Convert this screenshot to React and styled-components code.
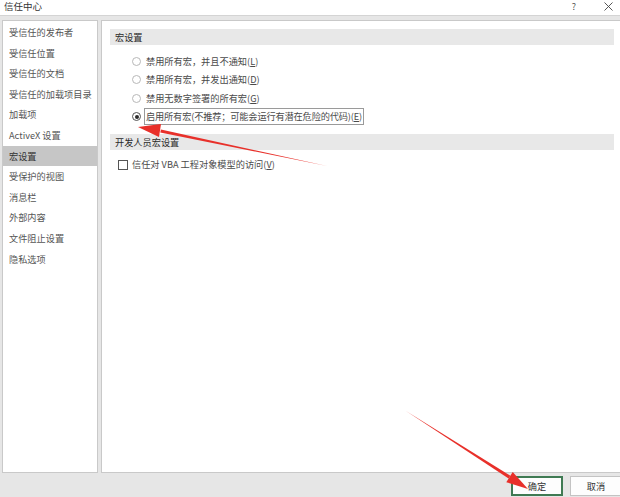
import styled, { createGlobalStyle } from "styled-components";

const Global = createGlobalStyle`
    html, body { margin: 0; padding: 0; }
    body {
        font-family: "Noto Sans CJK SC", "Liberation Sans", sans-serif;
        font-size: 9.2px;
        color: #444;
        background: #e6e6e6;
    }
`

const Window = styled.div`
    width: 620px;
    height: 497px;
    display: flex;
    flex-direction: column;
    overflow: hidden;
    position: relative;
    background: #e6e6e6;
`

const TitleBar = styled.div`
    height: 16px;
    background: #fff;
    border-bottom: 1px solid #d4d4d4;
    display: flex;
    align-items: flex-start;
    padding: 1px 0 0 4px;
    box-sizing: border-box;
    font-size: 9.5px;
    color: #333;
`
const Title = styled.span`
    flex: 1;
    line-height: 11px;
`
const TitleBtn = styled.span`
    width: ${p => p.$w}px;
    height: 11px;
    display: flex;
    justify-content: center;
    align-items: center;
    color: #555;
    font-size: 9px;
    line-height: 11px;
`

const Body = styled.div`
    flex: 1;
    display: flex;
    gap: 3px;
    padding: 4px 0 0 2px;
    min-height: 0;
`

const Nav = styled.div`
    width: 94px;
    background: #fff;
    border: 1px solid #c9c9c9;
    padding-top: 1px;
`
const NavItem = styled.div`
    height: 20.6px;
    line-height: 20.6px;
    padding-left: 6px;
    white-space: nowrap;
    color: ${p => (p.$active ? "#333" : "#555")};
    background: ${p => (p.$active ? "#c6c6c6" : "transparent")};
`

const Main = styled.div`
    flex: 1;
    background: #fff;
    border: 1px solid #c9c9c9;
    border-right: none;
    padding: 8px 6px 0 8px;
`
const SectionHead = styled.div`
    height: 16px;
    line-height: 16px;
    background: #e8e8e8;
    padding-left: 5px;
    color: #2a2a2a;
`
const Options = styled.div`
    padding: 7px 0 8px 22px;
`
const Row = styled.div`
    height: 18.5px;
    display: flex;
    align-items: center;
    gap: 5px;
`
const Radio = styled.span`
    width: 7px;
    height: 7px;
    border-radius: 50%;
    border: 1px solid ${p => (p.$on ? "#555" : "#b8b8b8")};
    display: flex;
    align-items: center;
    justify-content: center;
    background: #fff;
    &::after {
        content: "";
        width: 4px;
        height: 4px;
        border-radius: 50%;
        background: ${p => (p.$on ? "#2b2b2b" : "transparent")};
    }
`
const Label = styled.span`
    color: #4a4a4a;
    white-space: nowrap;
    border: 1px solid ${p => (p.$focus ? "#9a9a9a" : "transparent")};
    padding: 0 1px;
    margin-left: -2px;
    line-height: 15px;
    letter-spacing: ${p => (p.$focus ? "-0.15px" : "0")};
    & u { text-decoration: underline; }
`
const CheckRow = styled.div`
    display: flex;
    align-items: center;
    gap: 4px;
    padding: 6px 0 0 8px;
`
const Check = styled.span`
    width: 8px;
    height: 8px;
    border: 1px solid #555;
    background: #fff;
`

const Footer = styled.div`
    height: 23px;
    display: flex;
    justify-content: flex-end;
    align-items: flex-end;
    gap: 7px;
    padding-bottom: 1px;
    margin-right: -2px;
`
const Button = styled.button`
    width: 52px;
    height: 20px;
    font-family: inherit;
    font-size: 9.2px;
    color: #333;
    background: #fdfdfd;
    border: 1px solid ${p => (p.$primary ? "#3f7a53" : "#c3c3c3")};
    box-shadow: ${p => (p.$primary ? "inset 0 0 0 1px #3f7a53" : "none")};
    padding: 0;
`

const Overlay = styled.svg`
    position: absolute;
    left: 0;
    top: 0;
    pointer-events: none;
`

const navItems = [
    "受信任的发布者",
    "受信任位置",
    "受信任的文档",
    "受信任的加载项目录",
    "加载项",
    "ActiveX 设置",
    "宏设置",
    "受保护的视图",
    "消息栏",
    "外部内容",
    "文件阻止设置",
    "隐私选项",
]

const radios = [
    ["禁用所有宏，并且不通知(", "L", ")"],
    ["禁用所有宏，并发出通知(", "D", ")"],
    ["禁用无数字签署的所有宏(", "G", ")"],
    ["启用所有宏(不推荐；可能会运行有潜在危险的代码)(", "E", ")"],
]

export default function App() {
    return (
        <Window>
            <Global />
            <TitleBar>
                <Title>信任中心</Title>
                <TitleBtn $w={44}>?</TitleBtn>
                <TitleBtn $w={24}>
                    <svg width="9" height="9" viewBox="0 0 9 9">
                        <path d="M0.5 0.5L8.5 8.5M8.5 0.5L0.5 8.5" stroke="#444" strokeWidth="0.9" />
                    </svg>
                </TitleBtn>
            </TitleBar>
            <Body>
                <Nav>
                    {navItems.map(n => (
                        <NavItem key={n} $active={n === "宏设置"}>{n}</NavItem>
                    ))}
                </Nav>
                <Main>
                    <SectionHead>宏设置</SectionHead>
                    <Options>
                        {radios.map((r, i) => (
                            <Row key={r[1]}>
                                <Radio $on={i === 3} />
                                <Label $focus={i === 3}>
                                    {r[0]}<u>{r[1]}</u>{r[2]}
                                </Label>
                            </Row>
                        ))}
                    </Options>
                    <SectionHead>开发人员宏设置</SectionHead>
                    <CheckRow>
                        <Check />
                        <Label>信任对 VBA 工程对象模型的访问(<u>V</u>)</Label>
                    </CheckRow>
                </Main>
            </Body>
            <Footer>
                <Button $primary>确定</Button>
                <Button>取消</Button>
            </Footer>
            <Overlay width="620" height="497" viewBox="0 0 620 497">
                <polygon points="327,166 160.3,132.5 160.9,129.5" fill="#e8302a" />
                <polygon points="138,127 161,124 159,137" fill="#e8302a" />
                <polygon points="406,411 510.4,475.7 508.6,478.5" fill="#e8302a" />
                <polygon points="528,489 512.7,472 506.3,482.2" fill="#e8302a" />
            </Overlay>
        </Window>
    )
}
